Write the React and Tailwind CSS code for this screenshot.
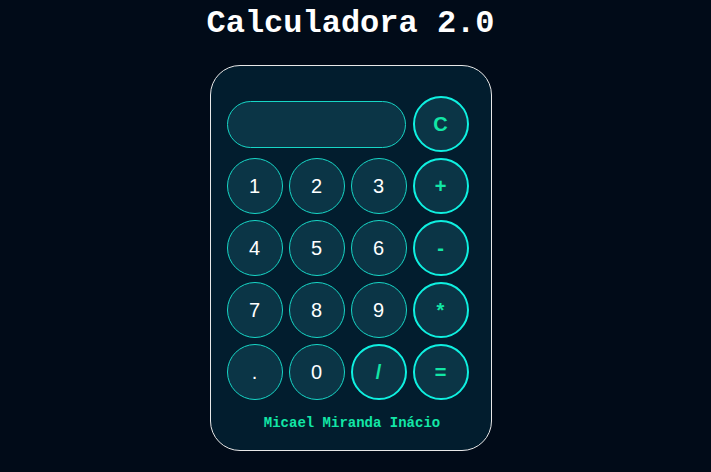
import React from "react";

const digitCls =
  "w-[56px] h-[56px] rounded-full border border-[#17d6c6] bg-[#0b3546] text-white text-[20px] flex items-center justify-center";
const opCls =
  "w-[56px] h-[56px] rounded-full border-2 border-[#0ff0e0] bg-[#0b3546] text-[#12e6a6] text-[20px] font-bold flex items-center justify-center";

export default function App() {
  const rows = [
    ["1", "2", "3", "+"],
    ["4", "5", "6", "-"],
    ["7", "8", "9", "*"],
    [".", "0", "/", "="],
  ];
  const isOp = (k) => ["+", "-", "*", "/", "="].includes(k);
  return (
    <div
      className="min-h-screen w-full bg-[#010b18] flex flex-col items-center pr-[10px]"
      style={{ fontFamily: '"Liberation Sans", Arial, sans-serif' }}
    >
      <h1
        className="mt-[6px] text-[32px] font-bold text-white leading-[36px]"
        style={{ fontFamily: '"Liberation Mono", "Courier New", monospace' }}
      >
        Calculadora 2.0
      </h1>
      <div className="mt-[23px] w-[282px] rounded-[30px] border border-[#e8e8e8] bg-[#021d2e] pt-[30px] pb-[19px] flex flex-col">
        <div className="pl-[16px] grid grid-cols-[repeat(4,56px)] gap-[6px]">
          <div className="col-span-3 flex items-center">
            <div className="w-[179px] h-[47px] rounded-full border border-[#17d6c6] bg-[#0b3546]" />
          </div>
          <div className={opCls}>C</div>
          {rows.flat().map((k, i) => (
            <div key={i} className={isOp(k) ? opCls : digitCls}>
              {k}
            </div>
          ))}
        </div>
        <div
          className="mt-[15px] pl-[3px] text-center text-[14px] leading-[16px] font-bold text-[#12e6a6]"
          style={{ fontFamily: '"Liberation Mono", "Courier New", monospace' }}
        >
          Micael Miranda Inácio
        </div>
      </div>
    </div>
  );
}
